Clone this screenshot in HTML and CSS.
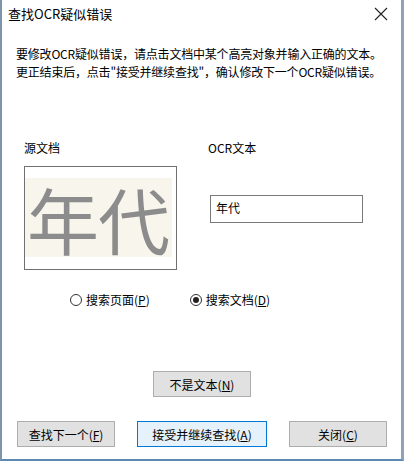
FILE: index.html
```html
<!DOCTYPE html>
<html lang="zh-CN">
<head>
    <meta charset="UTF-8">
    <title>查找OCR疑似错误</title>
    <link rel="stylesheet" href="styles.css">
</head>
<body>
    <div class="dialog">
        <div class="title-bar">
            <span class="title">查找OCR疑似错误</span>
            <svg class="close" width="14" height="14" viewBox="0 0 14 14">
                <path d="M1 1 L13 13 M13 1 L1 13" stroke="#222" stroke-width="1.1" fill="none"/>
            </svg>
        </div>

        <div class="intro">
            <div>要修改OCR疑似错误，请点击文档中某个高亮对象并输入正确的文本。</div>
            <div>更正结束后，点击"接受并继续查找"，确认修改下一个OCR疑似错误。</div>
        </div>

        <div class="compare">
            <div class="source-col">
                <div class="label">源文档</div>
                <div class="source-box">
                    <div class="scan">年代</div>
                </div>
            </div>
            <div class="ocr-col">
                <div class="label">OCR文本</div>
                <div class="ocr-input">年代</div>
            </div>
        </div>

        <div class="scope">
            <label class="radio"><span class="dot"></span><span>搜索页面(<u>P</u>)</span></label>
            <label class="radio"><span class="dot checked"></span><span>搜索文档(<u>D</u>)</span></label>
        </div>

        <div class="middle-row">
            <button class="btn">不是文本(<u>N</u>)</button>
        </div>

        <div class="bottom-row">
            <button class="btn">查找下一个(<u>F</u>)</button>
            <button class="btn default">接受并继续查找(<u>A</u>)</button>
            <button class="btn">关闭(<u>C</u>)</button>
        </div>
    </div>
</body>
</html>
```

FILE: styles.css
```css
* {
    margin: 0;
    padding: 0;
    box-sizing: border-box;
}

body {
    font-family: "Noto Sans CJK SC", "Noto Sans", sans-serif;
    font-size: 12px;
    color: #000;
    background: #fff;
    width: 404px;
    height: 461px;
    overflow: hidden;
}

.dialog {
    width: 404px;
    height: 461px;
    background: #fff;
    border-left: 2px solid #7d95aa;
    border-right: 3px solid #8ea3b5;
    border-bottom: 2px solid #5c8ab2;
}

.title-bar {
    display: flex;
    justify-content: space-between;
    align-items: center;
    height: 28px;
    padding: 0 13px 0 6px;
}

.title {
    font-size: 13px;
    line-height: 18px;
}

.close {
    display: block;
}

.intro {
    padding: 17px 0 0 14px;
    line-height: 18px;
    letter-spacing: -0.2px;
}

.compare {
    display: flex;
    padding: 58px 0 0 22px;
}

.label {
    line-height: 18px;
}

.source-col {
    width: 184px;
}

.source-box {
    margin-top: 9px;
    width: 153px;
    height: 104px;
    border: 1px solid #707070;
    background: #fff;
    padding-top: 11px;
}

.scan {
    width: 147px;
    height: 79px;
    background: #f8f5ec;
    color: #8c8c8c;
    font-size: 72px;
    line-height: 79px;
    letter-spacing: -1px;
    text-indent: 2px;
    filter: blur(0.5px);
    white-space: nowrap;
}

.ocr-input {
    margin: 38px 0 0 2px;
    width: 153px;
    height: 28px;
    border: 1px solid #7a7a7a;
    padding: 3px 0 0 5px;
    line-height: 18px;
}

.scope {
    display: flex;
    gap: 40px;
    padding: 21px 0 0 68px;
}

.radio {
    display: flex;
    align-items: center;
    gap: 4px;
    line-height: 18px;
}

.dot {
    width: 12px;
    height: 12px;
    border: 1px solid #333;
    border-radius: 50%;
    display: flex;
    align-items: center;
    justify-content: center;
}

.dot.checked::after {
    content: "";
    width: 6px;
    height: 6px;
    border-radius: 50%;
    background: #222;
}

.middle-row {
    display: flex;
    padding: 62px 0 0 151px;
}

.btn {
    font-family: inherit;
    font-size: 12px;
    height: 26px;
    width: 98px;
    background: #e1e1e1;
    border: 1px solid #adadad;
    color: #000;
}

.btn.default {
    width: 130px;
    background: #e5f1fb;
    border-color: #0078d7;
}

.bottom-row {
    display: flex;
    gap: 22px;
    padding: 24px 0 0 15px;
}
```
